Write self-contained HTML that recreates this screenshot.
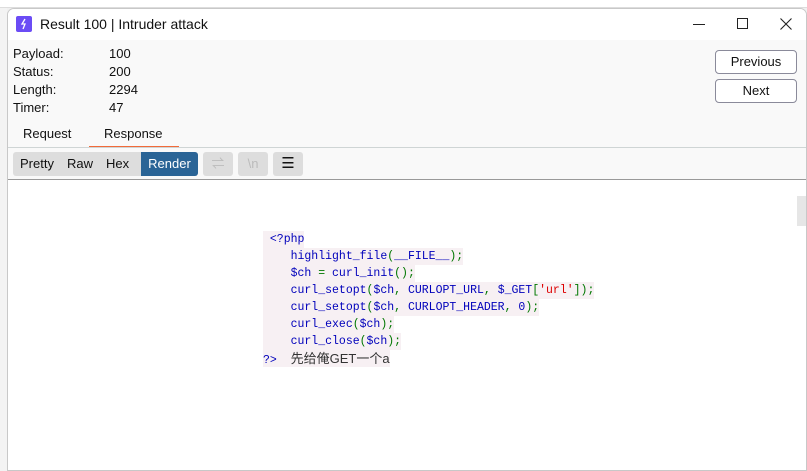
<!DOCTYPE html>
<html><head><meta charset="utf-8"><style>
*{margin:0;padding:0;box-sizing:border-box}
body{width:807px;height:471px;overflow:hidden;background:#f0f0f0;font-family:"Segoe UI","Liberation Sans","Noto Sans CJK SC",sans-serif;font-size:13px;color:#111;position:relative}
.bgtop{position:absolute;left:0;top:0;width:807px;height:8px;background:#fff;border-bottom:1px solid #ddd}
.bgleft{position:absolute;left:0;top:8px;width:7px;height:463px;background:#f3f3f3}
.win{position:absolute;left:7px;top:8px;width:800px;height:463px;background:#f9f9f9;border:1px solid #c8c8c8;border-radius:7px 7px 0 0;overflow:hidden}
.title{height:31px;background:#fff;position:relative}
.logo{position:absolute;left:8px;top:7px;width:16px;height:16px;background:#6b4cf5;border-radius:2px}
.title .t{position:absolute;left:32px;top:7px;font-size:14px}
.abs{position:absolute}
.btn{position:absolute;left:707px;width:82px;height:24px;border:1px solid #8a8a9a;border-radius:4px;background:#fff;text-align:center;line-height:22px;font-size:13px}
.tabs span{position:absolute;top:117px;font-size:13px}
.tb{position:absolute;top:143px;height:24px;background:#ddd;border-radius:3px;font-size:13px;line-height:24px}
.panel{position:absolute;left:0;top:170px;width:800px;height:300px;background:#fff;border-top:1px solid #999}
.code{position:absolute;left:255px;top:51px;font-family:"Liberation Mono",monospace;font-size:11.5px;line-height:17px;color:#0000bb}
.code div{background:#f7f0f3;display:inline-block;height:17px;white-space:pre}
.g{color:#007700}.r{color:#dd0000}
</style></head><body>
<div class="bgtop"></div><div class="bgleft"></div>
<div class="win">
 <div class="title"><div class="logo"><svg width="16" height="16"><path d="M9 3 L6 8 H9 L7 13" stroke="#fff" stroke-width="1.3" fill="none"/></svg></div><span class="t">Result 100 | Intruder attack</span>
 <div class="abs" style="left:685px;top:15px;width:12px;height:1px;background:#222"></div>
 <div class="abs" style="left:729px;top:9px;width:11px;height:11px;border:1px solid #222"></div>
 <svg class="abs" style="left:772px;top:9px" width="12" height="12"><path d="M0.5 0.5 L11.5 11.5 M11.5 0.5 L0.5 11.5" stroke="#222" stroke-width="1.1"/></svg>
 </div>
 <div class="abs" style="left:5px;top:36px;line-height:18px">Payload:<br>Status:<br>Length:<br>Timer:</div>
 <div class="abs" style="left:101px;top:36px;line-height:18px">100<br>200<br>2294<br>47</div>
 <div class="btn" style="top:41px">Previous</div>
 <div class="btn" style="top:70px">Next</div>
 <div class="tabs"><span style="left:15px">Request</span><span style="left:96px">Response</span></div>
 <div class="abs" style="left:81px;top:137px;width:90px;height:2px;background:#f26b3a"></div>
 <div class="abs" style="left:0;top:138px;width:800px;height:1px;background:#cfd5d5"></div>
 <div class="tb" style="left:5px;width:185px"><span style="margin-left:7px">Pretty</span><span style="margin-left:13px">Raw</span><span style="margin-left:13px">Hex</span></div>
 <div class="tb" style="left:133px;width:57px;background:#2a6496;color:#fff;text-align:center;border-radius:0 3px 3px 0">Render</div>
 <div class="tb" style="left:195px;width:30px;color:#bbb;text-align:center">⇌</div>
 <div class="tb" style="left:230px;width:30px;color:#bbb;text-align:center">\n</div>
 <div class="tb" style="left:265px;width:30px;text-align:center;font-size:15px">☰</div>
 <div class="panel">
  <div class="abs" style="left:789px;top:16px;width:10px;height:30px;background:#e6e6e6"></div>
  <div class="code">
<div> &lt;?php</div><br>
<div>    highlight_file<span class="g">(</span>__FILE__<span class="g">);</span></div><br>
<div>    $ch <span class="g">=</span> curl_init<span class="g">();</span></div><br>
<div>    curl_setopt<span class="g">(</span>$ch<span class="g">,</span> CURLOPT_URL<span class="g">,</span> $_GET<span class="g">[</span><span class="r">'url'</span><span class="g">]);</span></div><br>
<div>    curl_setopt<span class="g">(</span>$ch<span class="g">,</span> CURLOPT_HEADER<span class="g">,</span> 0<span class="g">);</span></div><br>
<div>    curl_exec<span class="g">(</span>$ch<span class="g">);</span></div><br>
<div>    curl_close<span class="g">(</span>$ch<span class="g">);</span></div><br>
<div>?&gt;  <span style="font-family:'Liberation Sans','Noto Sans CJK SC',sans-serif;font-size:13px;color:#333">先给俺GET一个a</span></div>
  </div>
 </div>
</div>
</body></html>
